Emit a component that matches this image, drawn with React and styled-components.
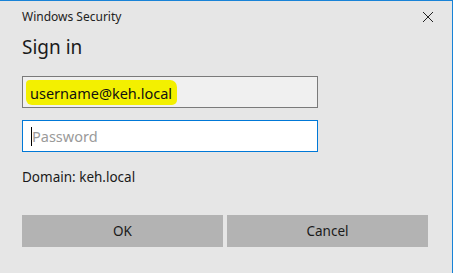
import React from "react";
import styled, { createGlobalStyle } from "styled-components";

const Global = createGlobalStyle`
  html, body { margin: 0; padding: 0; background: #e6e6e6; }
  body { font-family: "Noto Sans", "Segoe UI", sans-serif; color: #1a1a1a; }
`;

const Dialog = styled.div`
  box-sizing: border-box;
  width: 453px;
  height: 273px;
  background: #e6e6e6;
  border-top: 1px solid #1883d7;
  border-right: 1px solid #1883d7;
  padding: 0 24px 0 22px;
  display: flex;
  flex-direction: column;
`;

const TitleBar = styled.div`
  display: flex;
  align-items: center;
  justify-content: space-between;
  height: 32px;
`;

const Caption = styled.span`
  font-size: 12px;
  color: #222;
  margin-top: -1px;
`;

const Close = styled.button`
  border: 0;
  background: none;
  padding: 0;
  width: 12px;
  height: 12px;
  margin-right: -6px;
  display: flex;
`;

const Heading = styled.h1`
  margin: 0;
  font-weight: 400;
  font-size: 19px;
  line-height: 28px;
  color: #1a1a1a;
`;

const Field = styled.div`
  box-sizing: border-box;
  width: 296px;
  height: 32px;
  margin-top: ${(p) => p.$top}px;
  border: 1px solid ${(p) => (p.$focus ? "#0078d7" : "#7a7a7a")};
  background: ${(p) => (p.$focus ? "#ffffff" : "#f0f0f0")};
  display: flex;
  align-items: center;
  padding-left: 8px;
  font-size: 14.5px;
`;

const Marker = styled.span`
  background: #f3f000;
  padding: 3px 5px 2px 4px;
  margin-left: -5px;
  border-radius: 4px 7px 5px 6px;
  color: #111;
`;

const Caret = styled.span`
  width: 1px;
  height: 19px;
  background: #000;
`;

const Placeholder = styled.span`
  color: #9a9a9a;
`;

const Domain = styled.div`
  margin-top: 16px;
  font-size: 13.5px;
  color: #1a1a1a;
`;

const Buttons = styled.div`
  margin-top: 29px;
  display: grid;
  grid-template-columns: 201px 201px;
  gap: 4px;
`;

const Button = styled.button`
  height: 32px;
  border: 0;
  background: #b3b3b3;
  font-family: inherit;
  font-size: 13.5px;
  color: #1a1a1a;
  padding: 0;
`;

export default function App() {
  return (
    <>
      <Global />
      <Dialog>
        <TitleBar>
          <Caption>Windows Security</Caption>
          <Close aria-label="Close">
            <svg width="12" height="12" viewBox="0 0 12 12">
              <path d="M1 1L11 11M11 1L1 11" stroke="#222" strokeWidth="1" fill="none" />
            </svg>
          </Close>
        </TitleBar>
        <Heading>Sign in</Heading>
        <Field $top={15}>
          <Marker>username@keh.local</Marker>
        </Field>
        <Field $top={12} $focus>
          <Caret />
          <Placeholder>Password</Placeholder>
        </Field>
        <Domain>Domain: keh.local</Domain>
        <Buttons>
          <Button>OK</Button>
          <Button>Cancel</Button>
        </Buttons>
      </Dialog>
    </>
  );
}
